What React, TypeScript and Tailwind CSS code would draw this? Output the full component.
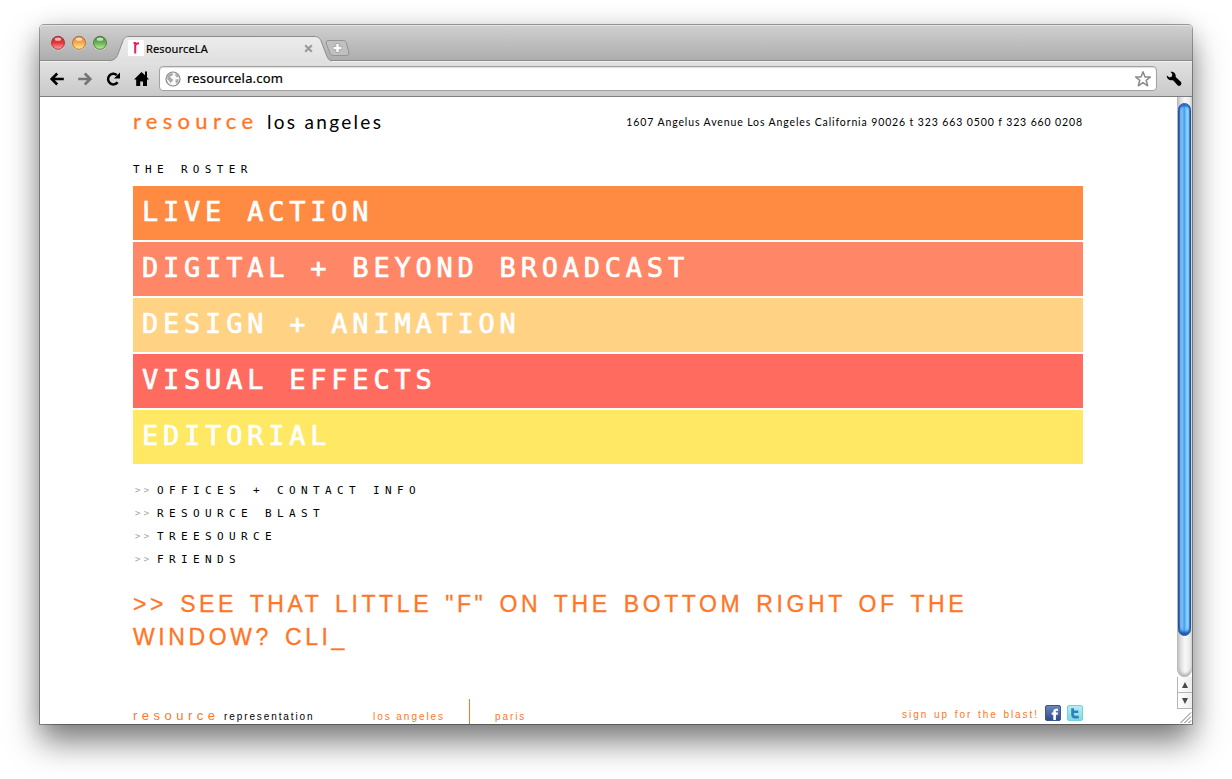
import React from "react";

const bars = [
  { label: "LIVE ACTION", className: "bg-[#ff8a42]" },
  { label: "DIGITAL + BEYOND BROADCAST", className: "bg-[#ff8666]" },
  { label: "DESIGN + ANIMATION", className: "bg-[#ffd284]" },
  { label: "VISUAL EFFECTS", className: "bg-[#ff6c5f]" },
  { label: "EDITORIAL", className: "bg-[#ffe863]" },
];

const links = ["OFFICES + CONTACT INFO", "RESOURCE BLAST", "TREESOURCE", "FRIENDS"];

function TrafficLight({ id, rim, dark, mid, light }: { id: string; rim: string; dark: string; mid: string; light: string }) {
  return (
    <svg width="15" height="16" viewBox="0 0 15 16">
      <defs>
        <linearGradient id={id} x1="0" y1="0" x2="0" y2="1">
          <stop offset="0" stopColor={dark} />
          <stop offset="0.5" stopColor={mid} />
          <stop offset="1" stopColor={light} />
        </linearGradient>
      </defs>
      <circle cx="7" cy="8.6" r="7" fill="#fff" opacity="0.45" />
      <circle cx="7" cy="7.8" r="6.5" fill={`url(#${id})`} stroke={rim} strokeWidth="1" />
      <ellipse cx="7" cy="4.2" rx="3.2" ry="1.6" fill="#fff" opacity="0.65" />
    </svg>
  );
}

function TabStrip() {
  return (
    <div className="flex h-9 shrink-0 items-start rounded-t-[4px] border-b border-[#8b8b8b] bg-linear-to-b from-[#d0d0d0] to-[#adadad] pl-[11px] shadow-[inset_0_1px_0_#e3e3e3]">
      <div className="mt-[10px] flex gap-[6px]">
        <TrafficLight id="red" rim="#a3383b" dark="#bd2c33" mid="#e8333c" light="#ffa9a5" />
        <TrafficLight id="amber" rim="#b27036" dark="#d9823a" mid="#f6ab4e" light="#ffee9c" />
        <TrafficLight id="green" rim="#497c3b" dark="#4b8f3f" mid="#68b254" light="#c6ec9e" />
      </div>
      <div className="relative mt-[11px] h-[26px] w-[224px]">
        <svg className="absolute inset-0" width="224" height="26" viewBox="0 0 224 26">
          <defs>
            <linearGradient id="tab" x1="0" y1="0" x2="0" y2="1">
              <stop offset="0" stopColor="#ececec" />
              <stop offset="1" stopColor="#e0e0e0" />
            </linearGradient>
          </defs>
          <path
            d="M0 26V24.5C6 24.5 8 23 10 18L14.500 6C16 2 17 .5 21 .5H206C210 .5 212 2 213.500 6L218 18C220 23 221 24.500 224 24.500V26Z"
            fill="url(#tab)"
          />
          <path
            d="M0 24.500C6 24.500 8 23 10 18L14.500 6C16 2 17 .5 21 .5H206C210 .5 212 2 213.500 6L218 18C220 23 221 24.500 224 24.500"
            fill="none"
            stroke="#8b8b8b"
          />
        </svg>
        <div className="relative flex h-[26px] items-center pl-[20px]">
          <svg className="mb-[2px]" width="16" height="16" viewBox="0 0 16 16">
            <path d="M0 0h16v16H0z" fill="#fff" />
            <path d="M5.500 3H7.200V13.500M7.200 5.500Q7.800 3.200 11 3.200" fill="none" stroke="#e8215f" strokeWidth="2" />
          </svg>
          <span className="mb-[1px] ml-[2px] w-[158px] font-['Noto_Sans',sans-serif] text-[11px] leading-4 tracking-[0.150px] text-black [-webkit-text-stroke:0.200px_#000]">
            ResourceLA
          </span>
          <svg className="mb-[1px]" width="9" height="9" viewBox="0 0 9 9">
            <path d="M1.200 1.200l6.600 6.600M7.800 1.200l-6.600 6.600" stroke="#999" strokeWidth="2.100" />
          </svg>
        </div>
      </div>
      <svg className="relative mt-[15px] -ml-[8px]" width="28" height="17" viewBox="0 0 28 17">
        <path
          d="M4 .5H19.500Q21.500 .5 22.300 2.500L24.800 12Q25.500 15.500 23 15.500H9Q7 15.500 6 13L2.300 4Q1.500 .5 4 .5Z"
          fill="#c0c0c0"
          stroke="#949494"
        />
        <path d="M13.500 3.500v9M9 8h9" stroke="#9a9a9a" strokeWidth="3.800" />
        <path d="M13.500 4v8M9.500 8h8" stroke="#fff" strokeWidth="2.400" />
      </svg>
    </div>
  );
}

function Toolbar() {
  return (
    <div className="flex h-9 shrink-0 items-center border-b border-[#7d7d7d] bg-linear-to-b from-[#e2e2e2] to-[#c9c9c9] pl-[9px] shadow-[inset_0_1px_0_#f2f2f2]">
      <svg width="16" height="16" viewBox="0 0 16 16" fill="none" stroke="#000" strokeWidth="2.600">
        <path d="M3 8H14.800M8.200 2.500L2.700 8l5.500 5.500" />
      </svg>
      <svg className="ml-[12px]" width="16" height="16" viewBox="0 0 16 16" fill="none" stroke="#757575" strokeWidth="2.600">
        <path d="M13 8H1.200M7.800 2.500l5.500 5.500-5.500 5.500" />
      </svg>
      <svg className="ml-[12px]" width="16" height="16" viewBox="0 0 16 16">
        <path d="M12.600 11.300A5.300 5.300 0 1 1 11.800 4.100" fill="none" stroke="#000" strokeWidth="2.500" />
        <path d="M15 1.500V7.500H9Z" />
      </svg>
      <svg className="ml-[13px]" width="16" height="16" viewBox="0 0 16 16">
        <path d="M7.500 1L0 8.500H2.200V15H6.200V10.500H9V15H13V8.500H15L13 6.300V.5H11V4.300Z" />
      </svg>
      <div className="ml-[9px] flex h-[25px] w-[998px] items-center rounded-[4px] border border-[#a2a2a2] bg-white pl-[5px] shadow-[inset_0_1px_1px_#ddd]">
        <svg width="16" height="16" viewBox="0 0 16 16">
          <circle cx="8" cy="8" r="7" fill="#fafafa" stroke="#888" strokeWidth="1.200" />
          <path d="M2 6L4 3 7 2 8.500 3.500 6.500 5 5 5.500 6 7 8 8.500 7.500 10.500 6 11 5.500 13 4.200 10 2.500 8.500Z" fill="#ababab" />
          <path d="M10 2.500L12.500 3.500 14 6 12 6.500 10.500 5Z" fill="#ababab" />
          <path d="M10.500 8.500L13.500 8 13.500 10.500 11.500 12.800 10.500 11Z" fill="#ababab" />
        </svg>
        <span className="ml-[6px] flex-1 pb-px font-['Noto_Sans',sans-serif] text-[13px] leading-5 tracking-[0.170px] text-black [-webkit-text-stroke:0.200px_#000]">
          resourcela.com
        </span>
        <svg className="mr-[4px]" width="18" height="18" viewBox="0 0 18 18">
          <path
            d="M9 1.800L11 7H16.400L12.200 10.300 13.700 15.800 9 12.600 4.300 15.800 5.800 10.300 1.600 7H7Z"
            fill="#fff"
            stroke="#8a8a8a"
            strokeWidth="1.500"
            strokeLinejoin="round"
          />
        </svg>
      </div>
      <svg className="ml-[9px]" width="16" height="16" viewBox="0 0 16 16">
        <path d="M4.500 .8C7.500 .2 10.200 2.500 9.700 6L15 11Q16 12.500 14.800 14 13.300 15.500 11.800 14.500L7 9.200C3.500 10 .5 7.500 .8 4.500L3.500 6.500 6 5.500 6.300 3Z" />
      </svg>
    </div>
  );
}

function Scrollbar() {
  return (
    <div className="flex w-[15px] shrink-0 flex-col">
      <div className="flex h-[580px] flex-col rounded-b-[8px] border-l border-[#bbb] bg-linear-to-r from-[#cfcfcf] via-[#f8f8f8] to-[#e4e4e4] pt-[6px] shadow-[inset_0_-3px_3px_#b5b5b5]">
        <div className="mr-px h-[533px] rounded-[7px] border border-[#24539b] bg-[linear-gradient(90deg,#1763c4_0%,#8dc2f3_14%,#6db2f2_38%,#3f98ea_46%,#6cc0fa_62%,#a5e5ff_85%,#3f86c9_100%)] shadow-[inset_0_2px_2px_#1763c4,inset_0_-3px_3px_#1456b4]" />
      </div>
      <div className="flex h-[16px] items-center justify-center border-b border-l border-[#b5b5b5] bg-linear-to-r from-white to-[#ededed]">
        <svg width="8" height="6" viewBox="0 0 8 6">
          <path d="M4 0L7 6H1Z" fill="#4a4a4a" />
        </svg>
      </div>
      <div className="flex h-[16px] items-center justify-center border-b border-l border-[#b5b5b5] bg-linear-to-r from-white to-[#ededed]">
        <svg width="8" height="6" viewBox="0 0 8 6">
          <path d="M4 6L7 0H1Z" fill="#4a4a4a" />
        </svg>
      </div>
      <svg width="15" height="15" viewBox="0 0 15 15" fill="none" stroke="#777">
        <path d="M3.500 14L14 3.500M7.500 14L14 7.500M11.500 14L14 11.500" />
      </svg>
    </div>
  );
}

function FacebookIcon() {
  return (
    <svg width="16" height="16" viewBox="0 0 16 16">
      <defs>
        <linearGradient id="fb" x1="0" y1="0" x2="0" y2="1">
          <stop offset="0" stopColor="#6d88bd" />
          <stop offset="1" stopColor="#2e4a88" />
        </linearGradient>
      </defs>
      <rect x=".5" y=".5" width="15" height="15" rx="1.500" fill="url(#fb)" stroke="#3a5591" />
      <path d="M8.300 15V9.800H6.700V7.500H8.300V6.300C8.300 4.200 9.500 3.400 13 3.700V5.900C11.300 5.700 10.900 5.900 10.900 6.600V7.500H13L12.700 9.800H10.900V15Z" fill="#fff" />
    </svg>
  );
}

function TwitterIcon() {
  return (
    <svg width="16" height="16" viewBox="0 0 16 16">
      <defs>
        <linearGradient id="tw" x1="0" y1="0" x2="0" y2="1">
          <stop offset="0" stopColor="#b5eff1" />
          <stop offset="1" stopColor="#7fd8e4" />
        </linearGradient>
      </defs>
      <rect x=".5" y=".5" width="15" height="15" rx="1.500" fill="url(#tw)" stroke="#79cfdc" />
      <path d="M4.200 3.200H7V5.600H11.300V8.100H7V9.500Q7 10.800 8.500 10.800H11.800V13.400H8Q4.200 13.400 4.200 9.800Z" fill="#2f83b8" />
    </svg>
  );
}

function Page() {
  return (
    <div className="flex min-w-0 flex-1 flex-col pr-[94px] pl-[93px]">
      <header className="flex h-[48px] items-center justify-between whitespace-nowrap">
        <h1 className="flex items-baseline font-[Lato,sans-serif] leading-6">
          <span className="w-[134px] text-[22px] tracking-[5.300px] text-[#ff7626] [-webkit-text-stroke:0.300px_#ff7626]">resource</span>
          <span className="text-[19px] tracking-[2.300px] text-black">los angeles</span>
        </h1>
        <p className="mt-px font-[Lato,sans-serif] text-[10.500px] leading-4 tracking-[0.880px] text-black">
          1607 Angelus Avenue Los Angeles California 90026 t 323 663 0500 f 323 660 0208
        </p>
      </header>
      <h2 className="mt-[17px] h-[24px] font-['DejaVu_Sans_Mono',monospace] text-[11px] leading-4 tracking-[5.350px] text-black">
        THE ROSTER
      </h2>
      <nav className="flex flex-col gap-[2px]">
        {bars.map((bar) => (
          <a
            key={bar.label}
            className={`${bar.className} h-[54px] pl-[9px] font-['DejaVu_Sans_Mono',monospace] text-[27px] leading-[52px] tracking-[4.780px] whitespace-nowrap text-white [-webkit-text-stroke:0.700px_#fff]`}
          >
            {bar.label}
          </a>
        ))}
      </nav>
      <ul className="mt-[15px] font-['DejaVu_Sans_Mono',monospace] text-[11px] leading-[23px] text-black">
        {links.map((link) => (
          <li key={link} className="flex h-[23px]">
            <span className="w-[24px] pl-[2px] text-[9px] tracking-[3.400px] text-[#a5a5a5]">&gt;&gt;</span>
            <span className="tracking-[5.380px]">{link}</span>
          </li>
        ))}
      </ul>
      <p className="mt-[17px] font-['Liberation_Sans',sans-serif] text-[23px] leading-[33px] tracking-[3.600px] [word-spacing:3.100px] whitespace-nowrap text-[#ff7626] [-webkit-text-stroke:0.300px_#ff7626]">
        &gt;&gt; SEE THAT LITTLE "F" ON THE BOTTOM RIGHT OF THE
        <br />
        WINDOW? CLI_
      </p>
      <footer className="mt-[45px] flex h-[25px] shrink-0 font-['Liberation_Sans',sans-serif] text-[10px] leading-[36px] whitespace-nowrap text-[#ff7626]">
        <span className="w-[91px] text-[13px] leading-[34px] tracking-[4.500px]">resource</span>
        <span className="w-[149px] tracking-[1.900px] text-black">representation</span>
        <span className="w-[96px] tracking-[1.950px]">los angeles</span>
        <span className="w-[26px] border-l border-[#ff7626]" />
        <span className="flex-1 tracking-[1.900px]">paris</span>
        <span className="mr-[6px] leading-[32px] tracking-[1.950px] [word-spacing:1px]">sign up for the blast!</span>
        <span className="mt-[6px] flex h-4 gap-[6px]">
          <FacebookIcon />
          <TwitterIcon />
        </span>
      </footer>
    </div>
  );
}

export default function App() {
  return (
    <div className="h-[779px] w-[1232px] overflow-hidden bg-white pt-[25px] pl-[40px]">
      <div className="flex h-[699px] w-[1152px] flex-col rounded-t-[4px] bg-white shadow-[0_0_0_1px_rgba(0,0,0,0.35),0_0_24px_rgba(0,0,0,0.1),0_18px_32px_rgba(0,0,0,0.5)]">
        <TabStrip />
        <Toolbar />
        <div className="flex h-[627px] overflow-hidden">
          <Page />
          <Scrollbar />
        </div>
      </div>
    </div>
  );
}
